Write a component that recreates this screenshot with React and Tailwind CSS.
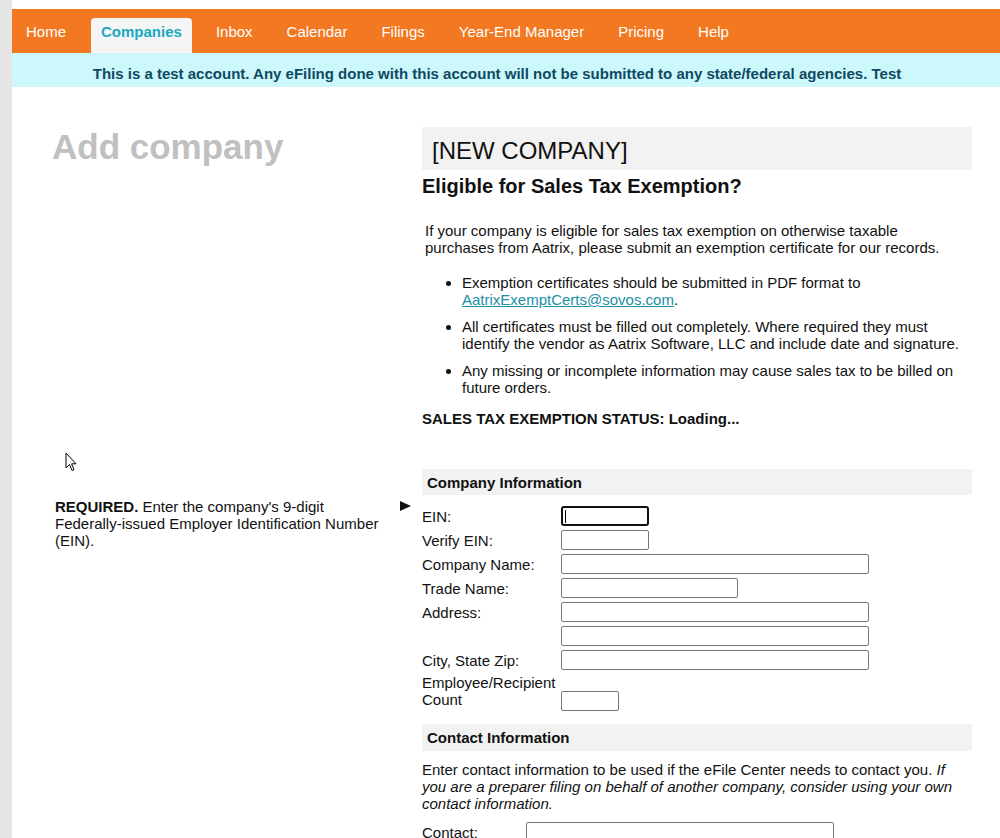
// Add company page: nav, test banner, help column and company form.
const navItems = ["Home", "Companies", "Inbox", "Calendar", "Filings", "Year-End Manager", "Pricing", "Help"];

const companyRows = [
  { label: "EIN:", width: "w-[88px]", focused: true },
  { label: "Verify EIN:", width: "w-[88px]" },
  { label: "Company Name:", width: "w-[308px]" },
  { label: "Trade Name:", width: "w-[177px]" },
  { label: "Address:", width: "w-[308px]" },
  { label: "", width: "w-[308px]" },
  { label: "City, State Zip:", width: "w-[308px]" },
];

const TextBox = ({ width, focused }) =>
  focused ? (
    <div className={`relative h-[20px] ${width} rounded-[3px] border-2 border-[#101010] bg-white`}>
      <span className="absolute left-[2px] top-[2px] h-[13px] w-px bg-black" />
    </div>
  ) : (
    <input type="text" className={`h-[20px] ${width} rounded-[2px] border border-[#767676] bg-white outline-none`} />
  );

const SectionHeader = ({ title, className = "" }) => (
  <div className={`flex items-center bg-[#f2f2f2] pl-[5px] text-[15px] font-bold leading-[17px] ${className}`}>{title}</div>
);

const Cursor = () => (
  <svg className="absolute left-[53px] top-[365px]" width="13" height="21" viewBox="0 0 13 21">
    <path d="M1 1 L1 16 L4.5 12.5 L7 18.5 L9 17.6 L6.6 11.8 L11 11.8 Z" fill="white" stroke="black" strokeWidth="1" strokeLinejoin="round" />
  </svg>
);

export default function App() {
  return (
    <div className="flex min-h-screen bg-white font-['Liberation_Sans',Arial,sans-serif] text-[#111]">
      <div className="w-[12px] shrink-0 bg-[#e6e6e6]" />
      <div className="flex-1 pt-[9px]">
        <nav className="flex h-[44px] items-end gap-[14px] bg-[#f37822] pl-[4px]">
          {navItems.map((item) =>
            item === "Companies" ? (
              <span key={item} className="ml-[1px] h-[35px] rounded-t-[4px] bg-[#f5f5f5] px-[10px] pt-[5px] text-[15px] font-bold leading-[17px] text-[#19a9c1]">
                {item}
              </span>
            ) : (
              <span key={item} className="h-[35px] px-[10px] pt-[5px] text-[15px] leading-[17px] text-white">
                {item}
              </span>
            )
          )}
        </nav>
        <div className="h-[34px] bg-[#ccf7fb] pr-[18px] pt-[12px] text-center text-[15px] font-bold leading-[17px] text-[#0e4a62]">
          This is a test account. Any eFiling done with this account will not be submitted to any state/federal agencies. Test
        </div>

        <div className="flex">
          <div className="relative w-[410px] shrink-0">
            <h1 className="pl-[40px] pt-[40px] text-[35px] font-bold leading-[40px] text-[#c0c0c0]">Add company</h1>
            <Cursor />
            <div className="mt-[331px] flex items-start pl-[43px]">
              <p className="w-[335px] text-[15px] leading-[17px]">
                <b>REQUIRED.</b> Enter the company's 9-digit Federally-issued Employer Identification Number (EIN).
              </p>
              <svg className="ml-[10px] mt-[3px]" width="11" height="10" viewBox="0 0 11 10">
                <polygon points="0,0 11,5 0,10" fill="#111" />
              </svg>
            </div>
          </div>

          <div className="w-[550px] pt-[40px] text-[15px] leading-[17px]">
            <div className="flex h-[43px] items-center bg-[#f2f2f2] pl-[10px] pt-[4px] text-[24px] leading-[28px]">[NEW COMPANY]</div>
            <h2 className="mt-[5px] text-[20px] font-bold leading-[23px]">Eligible for Sales Tax Exemption?</h2>
            <p className="mt-[24px] pl-[3px] pr-[12px]">
              If your company is eligible for sales tax exemption on otherwise taxable purchases from Aatrix, please submit an exemption certificate for our records.
            </p>
            <ul className="mt-[18px] list-disc space-y-[10px] pl-[40px]">
              <li>
                Exemption certificates should be submitted in PDF format to{" "}
                <a href="#" className="text-[#1b8fa6] underline">AatrixExemptCerts@sovos.com</a>.
              </li>
              <li>All certificates must be filled out completely. Where required they must identify the vendor as Aatrix Software, LLC and include date and signature.</li>
              <li>Any missing or incomplete information may cause sales tax to be billed on future orders.</li>
            </ul>
            <p className="mt-[14px] font-bold">SALES TAX EXEMPTION STATUS: Loading...</p>

            <SectionHeader title="Company Information" className="mt-[42px] h-[26px]" />
            <div className="mt-[11px] flex flex-col gap-[4px]">
              {companyRows.map((row, i) => (
                <div key={i} className="flex h-[20px] items-center">
                  <span className="w-[139px] shrink-0">{row.label}</span>
                  <TextBox width={row.width} focused={row.focused} />
                </div>
              ))}
              <div className="flex h-[37px] items-end">
                <span className="w-[139px] shrink-0 self-start">Employee/Recipient Count</span>
                <TextBox width="w-[58px]" />
              </div>
            </div>

            <SectionHeader title="Contact Information" className="mt-[13px] h-[27px]" />
            <p className="mt-[10px]">
              Enter contact information to be used if the eFile Center needs to contact you.{" "}
              <i>If you are a preparer filing on behalf of another company, consider using your own contact information.</i>
            </p>
            <div className="mt-[10px] flex h-[20px] items-center">
              <span className="w-[104px] shrink-0">Contact:</span>
              <TextBox width="w-[308px]" />
            </div>
            <div className="h-[60px]" />
          </div>
        </div>
      </div>
    </div>
  );
}
